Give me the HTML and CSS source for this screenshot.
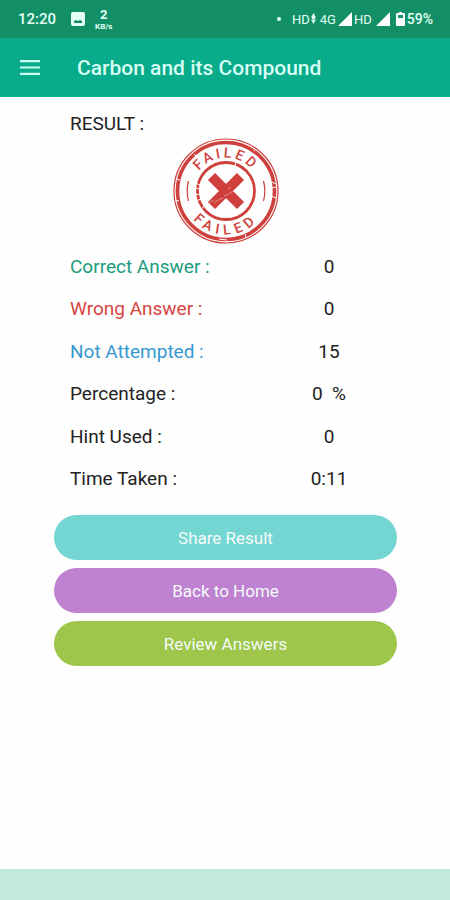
FILE: index.html
```
<!DOCTYPE html>
<html lang="en">
<head>
  <meta charset="UTF-8">
  <meta name="viewport" content="width=device-width, initial-scale=1">
  <title>Carbon and its Compound</title>
  <link rel="stylesheet" href="styles.css">
</head>
<body>

  <div class="status-bar">
    <span class="clock">12:20</span>
    <svg class="picture" width="14" height="14" viewBox="0 0 14 14">
      <rect width="14" height="14" rx="2" fill="#e4fff4"/>
      <path d="M3 11V9l2-1 2 1 2-1 2 1v2z" fill="#128f67"/>
    </svg>
    <span class="speed"><b>2</b><small>KB/s</small></span>

    <div class="signals">
      <span class="dot"></span>
      <span>HD</span>
      <svg class="arrows" width="5" height="12" viewBox="0 0 5 12">
        <path d="M2.5 0L5 4.5H0zM2.5 11L5 6.5H0zM1 4h3v3H1z" fill="#e4fff4"/>
      </svg>
      <span class="network">4G</span>
      <svg class="bars" width="14" height="14" viewBox="0 0 14 14"><path d="M14 0v14H0z" fill="#fff"/></svg>
      <span>HD</span>
      <svg class="bars second" width="14" height="14" viewBox="0 0 14 14"><path d="M14 0v14H0z" fill="#fff"/></svg>
      <svg class="battery" width="9" height="14" viewBox="0 0 9 14">
        <path d="M3 0h3v1h2q1 0 1 1v11q0 1-1 1H1q-1 0-1-1V2q0-1 1-1h2z" fill="#fff"/>
        <path d="M2 3h5v3H2z" fill="#128f67"/>
      </svg>
      <span class="charge">59%</span>
    </div>
  </div>

  <header class="app-bar">
    <button class="menu" aria-label="Menu">
      <svg width="20" height="15" viewBox="0 0 20 15">
        <path d="M0 1.2h20M0 7.5h20M0 13.8h20" stroke="#c9fff0" stroke-width="2.2"/>
      </svg>
    </button>
    <h1>Carbon and its Compound</h1>
  </header>

  <main>
    <h2>RESULT :</h2>

    <svg class="stamp" width="106" height="106" viewBox="0 0 106 106" role="img" aria-label="Failed">
      <defs>
        <path id="top" d="M19.5 53a33.5 33.5 0 0 1 67 0"/>
        <path id="bottom" d="M9.5 53a43.5 43.5 0 0 0 87 0"/>
      </defs>
      <g fill="none" stroke="#cf3f3b">
        <circle cx="53" cy="53" r="52" stroke-width="1.2"/>
        <circle cx="53" cy="53" r="48.5" stroke-width="3.6"/>
        <circle cx="53" cy="53" r="28.5" stroke-width="2.8"/>
        <path d="M15.5 43a39 39 0 0 0 0 20M90.5 43a39 39 0 0 1 0 20" stroke-width="1.2"/>
        <path d="M38.5 38.5l29 29M67.5 38.5l-29 29" stroke-width="10"/>
      </g>
      <!-- worn spots in the ink -->
      <g fill="none" stroke="#fff">
        <path d="M22 45l5 2M22 50l5 1M22 57l5-1M23 63l5-2M28 71l4-3M63 24l-1 4M76 35l3-2" stroke-width="1"/>
        <path d="M99 44l4 2M99 50l4-1M98 58l5 2M2 62l4 1M46 101l8 1M3 41l4 1M21 16l2 2M81 13l2-2M73 100l-1-4" stroke-width="1"/>
        <path d="M41 65l6-4 3-1M51 58l5-2 4-3M55 51l3-2M37 64l4-2" stroke-width=".5" opacity=".8"/>
      </g>
      <g class="stamp-text">
        <text><textPath href="#top" startOffset="50%">FAILED</textPath></text>
        <text class="lower"><textPath href="#bottom" startOffset="50%">FAILED</textPath></text>
      </g>
    </svg>

    <table>
      <tr class="correct">
        <th scope="row">Correct Answer :</th>
        <td>0</td>
      </tr>
      <tr class="wrong">
        <th scope="row">Wrong Answer :</th>
        <td>0</td>
      </tr>
      <tr class="skipped">
        <th scope="row">Not Attempted :</th>
        <td>15</td>
      </tr>
      <tr>
        <th scope="row">Percentage :</th>
        <td>0&nbsp; %</td>
      </tr>
      <tr>
        <th scope="row">Hint Used :</th>
        <td>0</td>
      </tr>
      <tr>
        <th scope="row">Time Taken :</th>
        <td>0:11</td>
      </tr>
    </table>

    <div class="actions">
      <button class="share">Share Result</button>
      <button class="home">Back to Home</button>
      <button class="review">Review Answers</button>
    </div>
  </main>

  <footer></footer>

</body>
</html>
```

FILE: styles.css
```
* {
  box-sizing: border-box;
}

body {
  margin: 0;
  min-height: 100vh;
  display: flex;
  flex-direction: column;
  background-color: #fefefe;
  color: #222;
  font-family: Roboto, Arial, sans-serif;
}

button {
  border: none;
  font-family: inherit;
  cursor: pointer;
}

.status-bar {
  display: flex;
  align-items: center;
  height: 38px;
  padding: 0 17px 0 18px;
  background-color: #128f67;
  color: #e4fff4;
  font-size: 15px;
}

.clock {
  font-weight: 500;
}

.picture {
  margin-left: 15px;
}

.speed {
  display: flex;
  flex-direction: column;
  align-items: center;
  margin-left: 10px;
  font-size: 13px;
  line-height: 15px;
}

.speed small {
  font-size: 8px;
  font-weight: 700;
  line-height: 9px;
}

.signals {
  display: flex;
  align-items: center;
  margin-left: auto;
  font-family: "Liberation Sans Narrow", Roboto, sans-serif;
  font-size: 13px;
}

.dot {
  width: 4px;
  height: 4px;
  margin-right: 11px;
  border-radius: 50%;
  background-color: #e4fff4;
}

.arrows {
  margin: 0 4px 0 1px;
}

.bars {
  margin: 0 2px;
}

.second {
  margin: 0 6px 0 4px;
}

.battery {
  margin-right: 2px;
}

.charge {
  font-family: Roboto, sans-serif;
  font-size: 14px;
  font-weight: 500;
}

.app-bar {
  display: flex;
  align-items: center;
  height: 59px;
  padding: 0 20px;
  background-color: #08ab8a;
  color: #d8fff5;
}

.menu {
  display: flex;
  padding: 0;
  background: none;
}

h1 {
  margin: 0 0 0 37px;
  font-size: 21px;
  font-weight: 500;
}

main {
  flex: 1;
  display: flex;
  flex-direction: column;
  padding: 14px 53px 24px 54px;
}

h2 {
  margin: 0 16px;
  font-size: 19px;
  font-weight: 400;
  line-height: 26px;
}

.stamp {
  align-self: center;
  margin: 1px 0;
}

.stamp-text {
  fill: #cf3f3b;
  font-size: 14px;
  font-weight: 500;
  text-anchor: middle;
  letter-spacing: 3px;
}

.stamp-text .lower {
  letter-spacing: 5px;
}

table {
  height: 255px;
  margin: 0 16px;
  border-collapse: collapse;
  font-size: 19px;
}

th, td {
  padding: 0;
  font-weight: 400;
}

th {
  text-align: left;
}

td {
  width: 104px;
  text-align: center;
}

.correct th {
  color: #1b9c7c;
}

.wrong th {
  color: #d64541;
}

.skipped th {
  color: #3598d0;
}

.actions {
  display: flex;
  flex-direction: column;
  gap: 8px;
  margin-top: 15px;
}

.actions button {
  height: 45px;
  border-radius: 23px;
  color: #f4fbf8;
  font-size: 17px;
}

.actions .share {
  background-color: #74d6d3;
}

.actions .home {
  background-color: #be82d1;
}

.actions .review {
  background-color: #9dc64b;
}

footer {
  height: 31px;
  background-color: #c1eadb;
}
```
